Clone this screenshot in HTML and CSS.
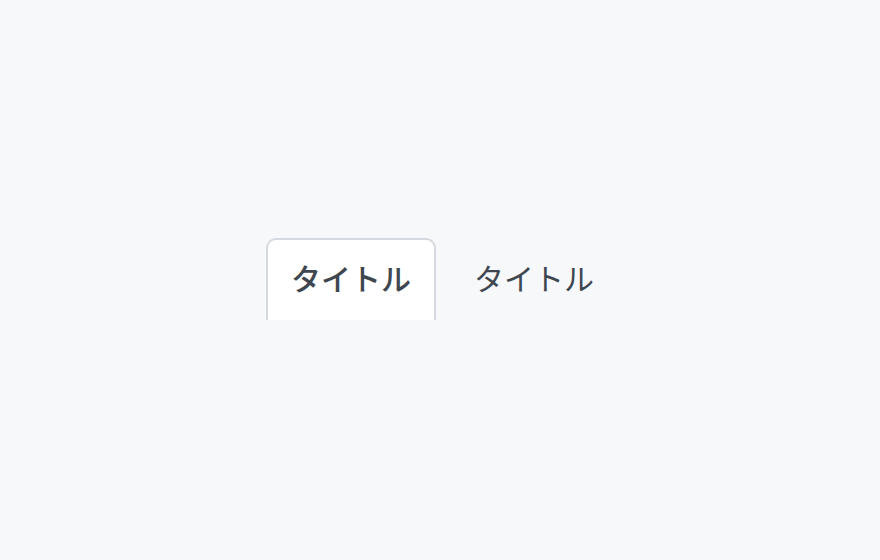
FILE: index.html
```html
<!DOCTYPE html>
<html lang="ja">
<head>
<meta charset="utf-8">
<link rel="stylesheet" href="styles.css">
</head>
<body>
<div class="stage">
  <div class="tabs">
    <div class="tab active">タイトル</div>
    <div class="tab">タイトル</div>
  </div>
</div>
</body>
</html>
```
FILE: styles.css
```css
html, body {
  margin: 0;
  padding: 0;
  background: #f7f8fa;
}
.stage {
  width: 880px;
  height: 560px;
  display: flex;
  align-items: center;
  justify-content: center;
}
.tabs {
  display: flex;
  gap: 13px;
  margin-top: -2px;
  margin-left: 5px;
}
.tab {
  box-sizing: border-box;
  width: 170px;
  height: 82px;
  padding-bottom: 6px;
  display: flex;
  align-items: center;
  justify-content: center;
  font-family: "Noto Sans CJK JP", sans-serif;
  font-size: 30px;
  color: #3e4750;
  border: 2px solid transparent;
  border-bottom: none;
  border-radius: 10px 10px 0 0;
}
.tab.active {
  background: #ffffff;
  border-color: #d3d9df;
  font-weight: 500;
}
```
